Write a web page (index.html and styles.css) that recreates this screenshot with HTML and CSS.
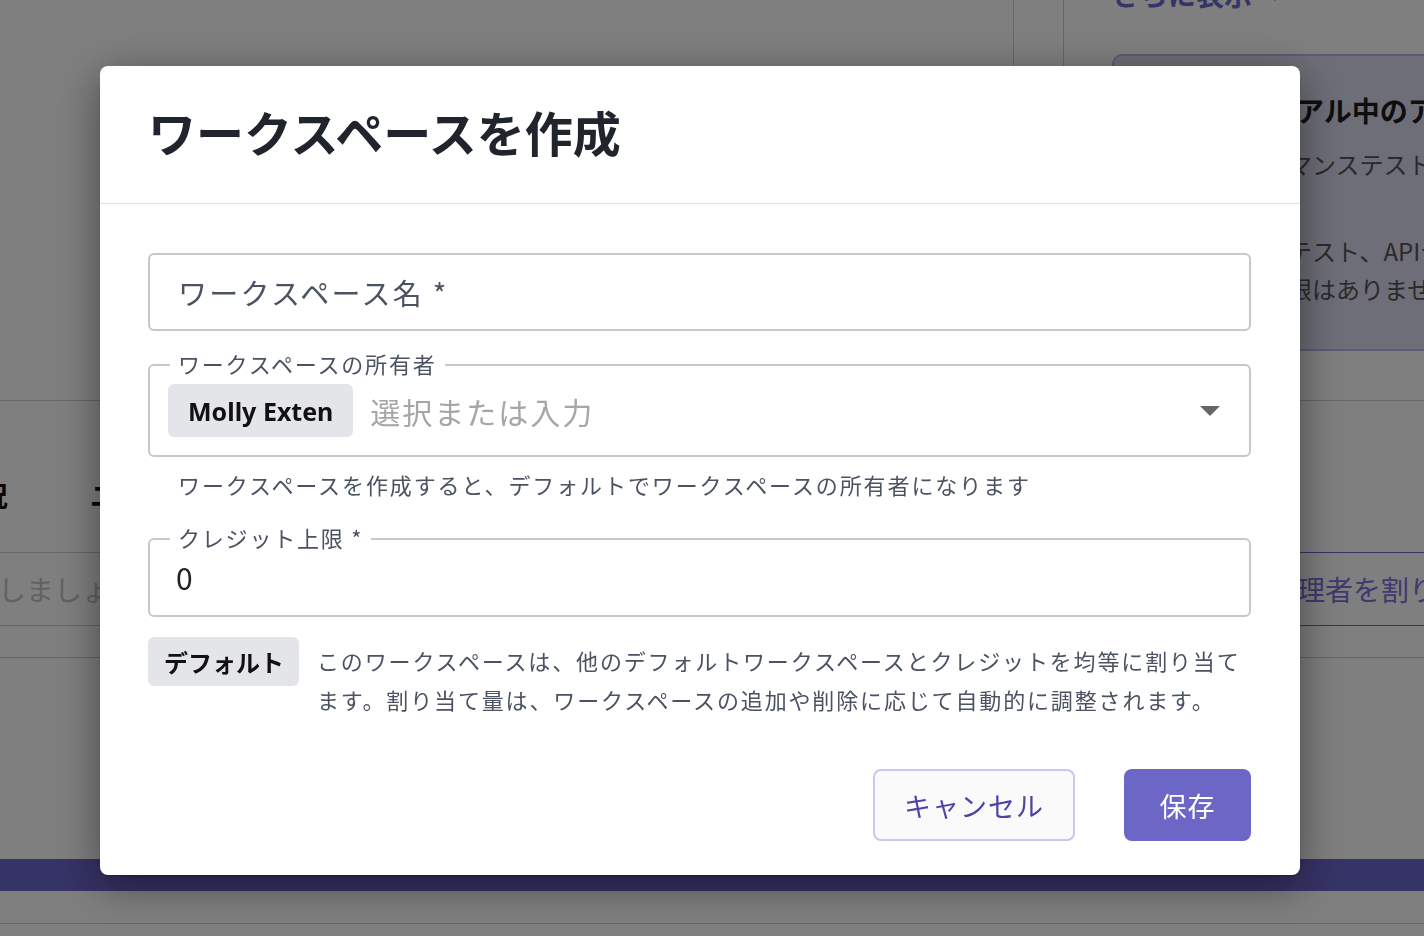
FILE: index.html
```html
<!DOCTYPE html>
<html lang="ja">
  <head>
    <meta charset="UTF-8" />
    <meta name="viewport" content="width=device-width, initial-scale=1.0" />
    <title>ワークスペースを作成</title>
    <link rel="stylesheet" href="styles.css">
  </head>
  <body>
    <div class="page">
      <div class="top">
        <div class="top-main"></div>
        <div class="top-gap"></div>
        <aside class="side">
          <a class="more">さらに表示
            <svg width="18" height="14" viewBox="0 0 18 14"><polygon points="1,2 9,0 17,2 9,13" fill="#6c66cc"/></svg>
          </a>
          <div class="trial-card">
            <h3>無料トライアル中のアカウント</h3>
            <p>・パフォーマンステスト、</p>
            <p class="gap">ブラウザのテスト、APIテスト</p>
            <p>実行数の制限はありません。</p>
          </div>
        </aside>
      </div>
      <div class="table-head">
        <span>状況</span>
        <span>ユーザー</span>
      </div>
      <div class="search-row">
        <div class="search-input">検索しましょう</div>
        <button class="assign-btn">管理者を割り当て</button>
      </div>
      <div class="list-foot"></div>
      <div class="band"></div>
      <div class="page-foot"></div>
    </div>

    <div class="overlay">
      <div class="dialog">
        <header class="dialog-head">
          <h2>ワークスペースを作成</h2>
        </header>
        <div class="dialog-body">
          <div class="field-name">ワークスペース名 *</div>

          <fieldset class="field owner">
            <legend>ワークスペースの所有者</legend>
            <div class="owner-row">
              <span class="chip">Molly Exten</span>
              <span class="select-ph">選択または入力</span>
              <svg class="caret" width="20" height="10" viewBox="0 0 20 10"><polygon points="0,0 20,0 10,10" fill="#666"/></svg>
            </div>
          </fieldset>
          <p class="hint">ワークスペースを作成すると、デフォルトでワークスペースの所有者になります</p>

          <fieldset class="field credit">
            <legend>クレジット上限 *</legend>
            <div class="credit-value">0</div>
          </fieldset>

          <div class="default-row">
            <span class="tag">デフォルト</span>
            <p>このワークスペースは、他のデフォルトワークスペースとクレジットを均等に割り当てます。割り当て量は、ワークスペースの追加や削除に応じて自動的に調整されます。</p>
          </div>

          <div class="actions">
            <button class="btn-cancel">キャンセル</button>
            <button class="btn-save">保存</button>
          </div>
        </div>
      </div>
    </div>
  </body>
</html>
```

FILE: styles.css
```css
*{
    margin: 0;
    padding: 0;
    box-sizing: border-box;
}
body{
    font-family: "Noto Sans CJK JP", "Noto Sans", sans-serif;
    background-color: #ffffff;
    color: #222222;
    overflow: hidden;
}

/* page behind the dialog */
.page{
    width: 1424px;
    height: 936px;
    overflow: hidden;
}
.top{
    display: flex;
    height: 401px;
    border-bottom: 1px solid #cccccc;
}
.top-main{
    width: 1014px;
    border-right: 1px solid #cccccc;
}
.top-gap{
    width: 50px;
    border-right: 1px solid #cccccc;
}
.side{
    flex: 1;
    min-width: 0;
    padding-left: 48px;
    white-space: nowrap;
}
.more{
    display: flex;
    align-items: flex-end;
    gap: 14px;
    height: 40px;
    margin-top: -26px;
    color: #6c66cc;
    font-size: 28px;
    font-weight: 700;
}
.more svg{
    margin-bottom: 12px;
}
.trial-card{
    width: 420px;
    height: 297px;
    margin-top: 40px;
    padding: 34px 0 0 42px;
    background-color: #dcdcf0;
    border: 2px solid #b8b4ee;
    border-radius: 10px;
}
.trial-card h3{
    font-size: 28px;
    line-height: 40px;
    color: #1c1c1c;
}
.trial-card p{
    padding-left: 12px;
    font-size: 24px;
    line-height: 38px;
    color: #555555;
}
.trial-card h3 + p{
    margin-top: 15px;
}
.trial-card .gap{
    margin-top: 49px;
}
.table-head{
    display: flex;
    align-items: flex-end;
    gap: 82px;
    height: 151px;
    padding-bottom: 37px;
    margin-left: -48px;
    font-size: 28px;
    font-weight: 700;
    line-height: 40px;
    color: #111111;
}
.search-row{
    display: flex;
    height: 74px;
}
.search-input{
    flex: 1;
    display: flex;
    align-items: center;
    margin-left: -58px;
    border-top: 1px solid #cccccc;
    border-bottom: 1px solid #cccccc;
    font-size: 28px;
    color: #c4c4c4;
}
.assign-btn{
    width: 200px;
    padding-left: 24px;
    margin-right: -20px;
    text-align: left;
    background-color: #ffffff;
    border: 1px solid #6c66cc;
    border-right: none;
    font-family: inherit;
    font-size: 28px;
    color: #7c74dc;
    white-space: nowrap;
}
.list-foot{
    height: 32px;
    border-bottom: 1px solid #cccccc;
}
.band{
    height: 32px;
    margin-top: 201px;
    background-color: #6c66cc;
}
.page-foot{
    height: 33px;
    border-bottom: 1px solid #cccccc;
}

/* modal */
.overlay{
    position: fixed;
    inset: 0;
    display: flex;
    justify-content: center;
    align-items: flex-start;
    padding: 66px 24px 0 0;
    background-color: rgba(0, 0, 0, 0.5);
}
.dialog{
    width: 1200px;
    background-color: #ffffff;
    border-radius: 8px;
    box-shadow: 0 2px 1px rgba(0, 0, 0, 0.15), 0 10px 44px rgba(0, 0, 0, 0.45);
}
.dialog-head{
    display: flex;
    align-items: center;
    height: 138px;
    padding: 0 48px 8px 48px;
    border-bottom: 1px solid #e0e0e0;
}
.dialog-head h2{
    font-size: 48px;
    font-weight: 700;
    line-height: 60px;
    color: #20242c;
}
.dialog-body{
    padding: 49px 49px 34px 48px;
}
.field-name{
    display: flex;
    align-items: center;
    height: 78px;
    padding-left: 28px;
    border: 2px solid #c8c8c8;
    border-radius: 6px;
    font-size: 29px;
    letter-spacing: 2.3px;
    color: #4b5261;
}
.field{
    border: 2px solid #c8c8c8;
    border-radius: 6px;
    padding: 4px 18px 18px 18px;
}
.field legend{
    margin-left: 2px;
    padding: 0 8px 4px 8px;
    font-size: 22px;
    line-height: 26px;
    letter-spacing: 1.8px;
    color: #4b5261;
}
.owner{
    margin-top: 19px;
}
.owner-row{
    display: flex;
    align-items: center;
    height: 53px;
}
.chip{
    display: flex;
    align-items: center;
    height: 53px;
    padding: 0 20px;
    background-color: #e4e5e9;
    border-radius: 6px;
    font-family: "Noto Sans", sans-serif;
    font-size: 25px;
    font-weight: 700;
    color: #111111;
}
.select-ph{
    flex: 1;
    margin-left: 17px;
    font-size: 30px;
    letter-spacing: 2px;
    color: #a6a6a6;
}
.caret{
    margin-right: 11px;
}
.hint{
    margin-top: 13px;
    padding-left: 30px;
    font-size: 22px;
    line-height: 28px;
    letter-spacing: 1.9px;
    color: #4b5261;
}
.credit{
    margin-top: 26px;
    padding: 4px 18px 19px 18px;
}
.credit-value{
    height: 38px;
    padding-left: 8px;
    font-size: 30px;
    line-height: 38px;
    color: #222222;
}
.default-row{
    display: flex;
    align-items: flex-start;
    gap: 18px;
    margin-top: 20px;
}
.tag{
    flex-shrink: 0;
    display: flex;
    align-items: center;
    height: 49px;
    padding: 0 15px 0 16px;
    background-color: #e4e5e9;
    border-radius: 6px;
    font-size: 24px;
    font-weight: 700;
    color: #111111;
}
.default-row p{
    padding: 4px 0 2px 0;
    font-size: 22px;
    line-height: 39px;
    letter-spacing: 1.85px;
    color: #4b5261;
}
.actions{
    display: flex;
    justify-content: flex-end;
    gap: 49px;
    margin-top: 48px;
}
.actions button{
    height: 72px;
    border-radius: 8px;
    font-family: inherit;
    font-size: 27px;
    letter-spacing: 1px;
}
.btn-cancel{
    width: 202px;
    background-color: #fafafa;
    border: 2px solid #cbc7f0;
    color: #4a44a8;
}
.btn-save{
    width: 127px;
    background-color: #6c67c7;
    border: none;
    color: #ffffff;
}
```
